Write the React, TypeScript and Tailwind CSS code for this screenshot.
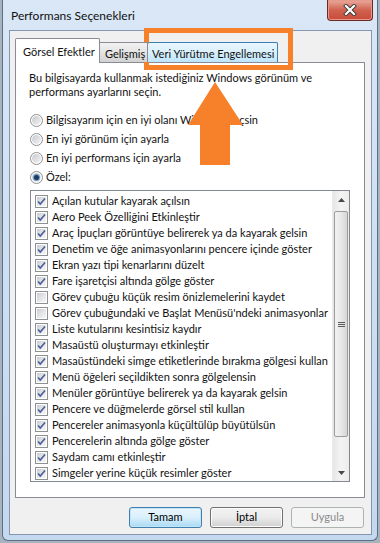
import React from 'react';

const items: [string, boolean][] = [
  ['Açılan kutular kayarak açılsın', true],
  ['Aero Peek Özelliğini Etkinleştir', true],
  ['Araç İpuçları görüntüye belirerek ya da kayarak gelsin', true],
  ['Denetim ve öğe animasyonlarını pencere içinde göster', true],
  ['Ekran yazı tipi kenarlarını düzelt', true],
  ['Fare işaretçisi altında gölge göster', true],
  ['Görev çubuğu küçük resim önizlemelerini kaydet', false],
  ["Görev çubuğundaki ve Başlat Menüsü'ndeki animasyonlar", false],
  ['Liste kutularını kesintisiz kaydır', true],
  ['Masaüstü oluşturmayı etkinleştir', true],
  ['Masaüstündeki simge etiketlerinde bırakma gölgesi kullan', true],
  ['Menü öğeleri seçildikten sonra gölgelensin', true],
  ['Menüler görüntüye belirerek ya da kayarak gelsin', true],
  ['Pencere ve düğmelerde görsel stil kullan', true],
  ['Pencereler animasyonla küçültülüp büyütülsün', true],
  ['Pencerelerin altında gölge göster', true],
  ['Saydam camı etkinleştir', true],
  ['Simgeler yerine küçük resimler göster', true],
];

function Check({ on }: { on: boolean }) {
  return (
    <span className="relative w-[13px] h-[13px] shrink-0 border border-[#8e8f8f] bg-white p-[1px] flex">
      <span className="flex-1 bg-gradient-to-br from-[#c9ccd2] via-[#e4e5e8] to-[#f7f7f7]" />
      {on && (
        <svg className="absolute left-0 top-0" width="11" height="11" viewBox="0 0 11 11">
          <path d="M2 5.5 L4.3 8 L9 2.5" fill="none" stroke="#4b5e99" strokeWidth="1.7" />
        </svg>
      )}
    </span>
  );
}

function Radio({ on }: { on?: boolean }) {
  return (
    <span className="w-[13px] h-[13px] shrink-0 rounded-full border border-[#8e8f8f] bg-white p-[1px] flex">
      <span className="flex-1 rounded-full bg-gradient-to-br from-[#c5c8ce] to-[#f5f5f5] flex items-center justify-center">
        {on && <span className="w-[5px] h-[5px] rounded-full bg-[#1e3c62] ring-[1px] ring-[#6b9ac8]" />}
      </span>
    </span>
  );
}

function Btn({ label, def, disabled }: { label: string; def?: boolean; disabled?: boolean }) {
  const cls = disabled
    ? 'border-[#adb2b5] bg-[#f4f4f4] text-[#8a8a8a]'
    : def
    ? 'border-[#3c7fb1] bg-gradient-to-b from-[#eaf6fd] via-[#d9f0fc] to-[#a7d9f5] text-black shadow-[inset_0_0_0_1px_#c6e4f6]'
    : 'border-[#707070] bg-gradient-to-b from-[#f2f2f2] via-[#ebebeb] to-[#cfcfcf] text-black shadow-[inset_0_0_0_1px_#fcfcfc]';
  return (
    <div className={`w-[73px] h-[21px] rounded-[3px] border flex items-center justify-center ${cls}`}>
      {label}
    </div>
  );
}

export default function App() {
  return (
    <div className="relative w-[380px] h-[543px] overflow-hidden bg-[#a7b3bf] text-[11px] text-[#111] font-['Lato',sans-serif]">
      <div className="ml-[2px] w-[376px] h-[541px] border-x border-b border-[#5f6f82] rounded-b-[6px] bg-gradient-to-b from-[#d9e7f6] via-[#cddff2] to-[#c4d8ef] flex flex-col">
        {/* title bar */}
        <div className="h-[30px] flex justify-between shrink-0">
          <div className="pl-[8px] pt-[8px] leading-[16px] text-[12px]">Performans Seçenekleri</div>
          <div className="mr-[4px] w-[46px] h-[21px] rounded-b-[4px] border-x border-b border-[#6b2a21] bg-gradient-to-b from-[#e9ab9f] via-[#d0624f] to-[#c8493a] shadow-[inset_0_0_0_1px_#e79a8c] flex items-center justify-center">
            <svg width="14" height="12" viewBox="0 0 14 12">
              <path d="M3 2 L11 10 M11 2 L3 10" stroke="#3a3a3a" strokeWidth="4" strokeLinecap="square" />
              <path d="M3 2 L11 10 M11 2 L3 10" stroke="#ffffff" strokeWidth="2.2" strokeLinecap="square" />
            </svg>
          </div>
        </div>

        {/* client */}
        <div className="ml-[6px] mr-[5px] mb-[5px] flex-1 border border-[#8597ae] bg-[#f0f0f0] flex flex-col">
          {/* tabs */}
          <div className="ml-[5px] mt-[7px] h-[24px] flex items-end relative z-10 whitespace-nowrap">
            <div className="w-[85px] h-[25px] -mb-px border-x border-t border-[#898c95] bg-white pl-[7px] pt-[5px] rounded-t-[2px]">
              Görsel Efektler
            </div>
            <div className="w-[48px] h-[20px] border-t border-r border-[#898c95] bg-gradient-to-b from-[#f2f2f2] via-[#e4e4e4] to-[#d2d2d2] pl-[5px] pt-[3px] rounded-tr-[2px]">
              Gelişmiş
            </div>
            <div className="w-[130px] h-[20px] border-t border-r border-[#3c7fb1] bg-gradient-to-b from-[#eaf6fd] via-[#d9f0fc] to-[#bee6fd] pl-[4px] pt-[3px] rounded-t-[2px]">
              Veri Yürütme Engellemesi
            </div>
          </div>

          {/* panel */}
          <div className="ml-[5px] w-[350px] h-[436px] border border-[#898c95] bg-white flex flex-col">
            <div className="pl-[13px] pt-[8px] leading-[14px]">
              Bu bilgisayarda kullanmak istediğiniz Windows görünüm ve
              <br />
              performans ayarlarını seçin.
            </div>
            <div className="mt-[12px] pl-[14px] flex flex-col">
              {[
                ['Bilgisayarım için en iyi olanı Windows seçsin', false],
                ['En iyi görünüm için ayarla', false],
                ['En iyi performans için ayarla', false],
                ['Özel:', true],
              ].map(([t, on]) => (
                <div key={t as string} className="h-[19px] flex items-center gap-[3px]">
                  <Radio on={on as boolean} />
                  <span>{t as string}</span>
                </div>
              ))}
            </div>

            {/* listbox */}
            <div className="mt-[3px] ml-[14px] w-[320px] h-[292px] border border-[#828790] bg-white flex">
              <div className="flex-1 pt-[2px] pl-[4px] flex flex-col overflow-hidden">
                {items.map(([t, on]) => (
                  <div key={t} className="h-[16px] flex items-center gap-[4px] whitespace-nowrap">
                    <Check on={on} />
                    <span>{t}</span>
                  </div>
                ))}
              </div>
              <div className="w-[17px] flex flex-col bg-gradient-to-r from-[#e6e6e6] via-[#f4f4f4] to-[#ececec] border-l border-[#eaeaea]">
                <div className="h-[17px] flex items-center justify-center">
                  <svg width="7" height="4" viewBox="0 0 7 4">
                    <path d="M0 4 L3.5 0 L7 4 Z" fill="#4a4a4a" />
                  </svg>
                </div>
                <div className="mt-[3px] mx-[1px] h-[226px] rounded-[2px] border border-[#9b9b9b] bg-gradient-to-r from-[#f3f3f3] via-[#e8e8e8] to-[#d6d6d6] flex flex-col items-center justify-center gap-[1px]">
                  <span className="w-[7px] h-[1px] bg-[#5a5a5a]" />
                  <span className="w-[7px] h-[1px] bg-[#5a5a5a]" />
                  <span className="w-[7px] h-[1px] bg-[#5a5a5a]" />
                </div>
                <div className="flex-1" />
                <div className="h-[17px] flex items-center justify-center">
                  <svg width="7" height="4" viewBox="0 0 7 4">
                    <path d="M0 0 L3.5 4 L7 0 Z" fill="#4a4a4a" />
                  </svg>
                </div>
              </div>
            </div>
          </div>

          {/* buttons */}
          <div className="mt-[9px] mr-[7px] flex justify-end gap-[8px]">
            <Btn label="Tamam" def />
            <Btn label="İptal" />
            <Btn label="Uygula" disabled />
          </div>
        </div>
      </div>

      {/* orange highlight */}
      <div className="absolute left-[144px] top-[28px] w-[149px] h-[42px] border-[5px] border-[#f7802a]" />
      <svg className="absolute left-0 top-0" width="380" height="543" viewBox="0 0 380 543">
        <polygon points="215,82 243,125 230,125 230,165 200,165 200,125 188,125" fill="#f7802a" />
      </svg>
    </div>
  );
}
